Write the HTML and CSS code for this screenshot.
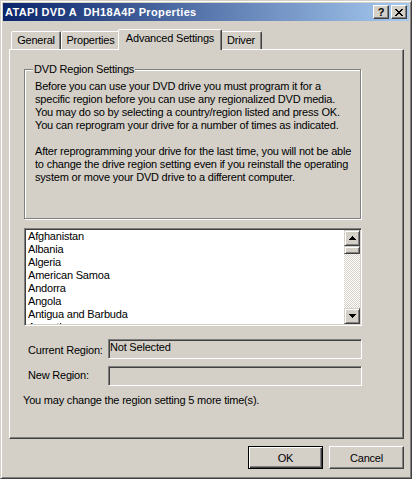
FILE: index.html
```html
<!DOCTYPE html>
<html>
<head>
<meta charset="utf-8">
<link rel="stylesheet" href="styles.css">
</head>
<body>
<div class="window">
  <div class="titlebar">
    <span class="title">ATAPI DVD A  DH18A4P Properties</span>
    <div class="caption-buttons">
      <span class="cap-btn help">?</span>
      <span class="cap-btn">
        <svg width="8" height="7" viewBox="0 0 8 7"><path d="M0 0h2v1h-2zM6 0h2v1h-2zM1 1h2v1h-2zM5 1h2v1h-2zM2 2h4v1h-4zM3 3h2v1h-2zM2 4h4v1h-4zM1 5h2v1h-2zM5 5h2v1h-2zM0 6h2v1h-2zM6 6h2v1h-2z" fill="#000"/></svg>
      </span>
    </div>
  </div>
  <div class="client">
    <div class="tabs">
      <div class="tab t-general">General</div>
      <div class="tab t-props">Properties</div>
      <div class="tab t-adv active">Advanced Settings</div>
      <div class="tab t-driver">Driver</div>
    </div>
    <div class="panel">
      <fieldset class="group">
        <legend>DVD Region Settings</legend>
        <p>Before you can use your DVD drive you must program it for a<br>specific region before you can use any regionalized DVD media.<br>You may do so by selecting a country/region listed and press OK.<br>You can reprogram your drive for a number of times as indicated.</p>
        <p class="second">After reprogramming your drive for the last time, you will not be able<br>to change the drive region setting even if you reinstall the operating<br>system or move your DVD drive to a different computer.</p>
      </fieldset>
      <div class="listbox">
        <ul class="items">
          <li>Afghanistan</li>
          <li>Albania</li>
          <li>Algeria</li>
          <li>American Samoa</li>
          <li>Andorra</li>
          <li>Angola</li>
          <li>Antigua and Barbuda</li>
          <li>Argentina</li>
        </ul>
        <div class="scrollbar">
          <div class="sb-btn"><svg width="7" height="4" viewBox="0 0 7 4"><path d="M3 0h1v1h1v1h1v1h1v1h-7v-1h1v-1h1v-1h1z" fill="#000"/></svg></div>
          <div class="sb-thumb"></div>
          <div class="sb-track"></div>
          <div class="sb-btn"><svg width="7" height="4" viewBox="0 0 7 4"><path d="M0 0h7v1h-1v1h-1v1h-1v1h-1v-1h-1v-1h-1v-1h-1z" fill="#000"/></svg></div>
        </div>
      </div>
      <div class="row row-current">
        <span class="label">Current Region:</span>
        <div class="field">Not Selected</div>
      </div>
      <div class="row row-new">
        <span class="label">New Region:</span>
        <div class="field"></div>
      </div>
      <p class="note">You may change the region setting 5 more time(s).</p>
    </div>
    <div class="buttons">
      <button class="btn default">OK</button>
      <button class="btn">Cancel</button>
    </div>
  </div>
</div>
</body>
</html>
```
FILE: styles.css
```css
html, body {
  margin: 0;
  padding: 0;
  background: #D4D0C8;
}
body {
  font-family: "Liberation Sans", Arial, sans-serif;
  font-size: 11px;
  letter-spacing: -0.2px;
  color: #000;
}
.window {
  width: 412px;
  height: 479px;
  box-sizing: border-box;
  border: 1px solid;
  border-color: #D4D0C8 #404040 #404040 #D4D0C8;
  box-shadow: inset 1px 1px #fff, inset -1px -1px #808080;
  padding: 2px;
  display: flex;
  flex-direction: column;
  background: #D4D0C8;
}
.titlebar {
  height: 18px;
  flex: none;
  display: flex;
  align-items: center;
  background: linear-gradient(to right, #0A246A, #A6CAF0);
  padding-left: 2px;
}
.title {
  flex: 1;
  color: #fff;
  font-weight: bold;
  font-size: 11px;
  letter-spacing: 0.35px;
  white-space: pre;
}
.caption-buttons {
  display: flex;
  gap: 2px;
  margin-right: 2px;
}
.cap-btn {
  width: 16px;
  height: 14px;
  box-sizing: border-box;
  background: #D4D0C8;
  border: 1px solid;
  border-color: #fff #404040 #404040 #fff;
  box-shadow: inset -1px -1px #808080;
  display: flex;
  align-items: center;
  justify-content: center;
}
.cap-btn.help {
  font-weight: bold;
  font-size: 11px;
  letter-spacing: 0;
  line-height: 12px;
}
.client {
  flex: 1;
  display: flex;
  flex-direction: column;
  padding: 8px 5px 0 6px;
}
.tabs {
  display: flex;
  align-items: flex-end;
  height: 20px;
  padding-left: 2px;
  position: relative;
  z-index: 1;
}
.tab {
  height: 18px;
  box-sizing: border-box;
  border: 1px solid;
  border-bottom: 0;
  border-color: #fff #404040 transparent #fff;
  box-shadow: inset -1px 0 #808080;
  border-radius: 2px 2px 0 0;
  line-height: 17px;
  text-align: center;
  background: #D4D0C8;
  white-space: nowrap;
}
.t-general { width: 50px; }
.t-props { width: 59px; }
.t-adv { width: 100px; }
.t-driver { width: 42px; }
.tab.active {
  width: 104px;
  height: 21px;
  margin: 0 -2px -1px;
  position: relative;
  z-index: 2;
  line-height: 17px;
}
.panel {
  height: 390px;
  box-sizing: border-box;
  border: 1px solid;
  border-color: #fff #404040 #404040 #fff;
  box-shadow: inset -1px -1px #808080;
  padding: 0 0 0 14px;
  display: flex;
  flex-direction: column;
}
.group {
  margin: 13px 0 0 0;
  width: 337px;
  height: 156px;
  box-sizing: border-box;
  border: 1px solid #808080;
  box-shadow: inset 1px 1px #fff, 1px 1px #fff;
  padding: 4px 0 0 10px;
  min-width: 0;
}
.group legend {
  padding: 0 1px;
  margin-left: -2px;
  line-height: 13px;
  background: #D4D0C8;
}
.group p {
  margin: 0;
  line-height: 13px;
  white-space: nowrap;
}
.group p.second {
  margin-top: 13px;
}
.listbox {
  margin-top: 9px;
  width: 338px;
  height: 98px;
  box-sizing: border-box;
  border: 1px solid;
  border-color: #808080 #fff #fff #808080;
  box-shadow: inset 1px 1px #404040, inset -1px -1px #D4D0C8;
  padding: 1px;
  display: flex;
  background: #fff;
}
.items {
  flex: 1;
  margin: 0;
  padding: 0 0 0 2px;
  list-style: none;
  overflow: hidden;
}
.items li {
  line-height: 13px;
  white-space: nowrap;
}
.scrollbar {
  width: 16px;
  display: flex;
  flex-direction: column;
}
.sb-btn, .sb-thumb {
  box-sizing: border-box;
  background: #D4D0C8;
  border: 1px solid;
  border-color: #D4D0C8 #404040 #404040 #D4D0C8;
  box-shadow: inset 1px 1px #fff, inset -1px -1px #808080;
}
.sb-btn {
  height: 16px;
  display: flex;
  align-items: center;
  justify-content: center;
}
.sb-thumb {
  height: 8px;
}
.sb-track {
  flex: 1;
  background: repeating-conic-gradient(#fff 0 25%, #D4D0C8 0 50%) 0 0 / 2px 2px;
}
.row {
  display: flex;
  align-items: flex-start;
}
.row-current {
  margin-top: 13px;
}
.row-new {
  margin-top: 7px;
}
.label {
  width: 84px;
  box-sizing: border-box;
  padding-left: 4px;
  line-height: 13px;
  white-space: nowrap;
}
.row-current .label { padding-top: 5px; }
.row-new .label { padding-top: 3px; }
.field {
  width: 254px;
  height: 20px;
  box-sizing: border-box;
  border: 1px solid;
  border-color: #808080 #fff #fff #808080;
  box-shadow: inset 1px 1px #404040, inset -1px -1px #D4D0C8;
  padding: 1px 1px;
  line-height: 13px;
}
.note {
  margin: 8px 0 0 -1px;
  line-height: 13px;
  white-space: nowrap;
}
.buttons {
  display: flex;
  justify-content: flex-end;
  gap: 6px;
  margin-top: 7px;
}
.btn {
  width: 75px;
  height: 23px;
  box-sizing: border-box;
  margin: 0;
  padding: 0;
  font-family: "Liberation Sans", Arial, sans-serif;
  font-size: 11px;
  letter-spacing: -0.2px;
  color: #000;
  background: #D4D0C8;
  border: 1px solid;
  border-color: #fff #404040 #404040 #fff;
  box-shadow: inset -1px -1px #808080;
}
.btn.default {
  border-color: #000;
  box-shadow: inset 1px 1px #fff, inset -1px -1px #404040, inset -2px -2px #808080;
}
```
